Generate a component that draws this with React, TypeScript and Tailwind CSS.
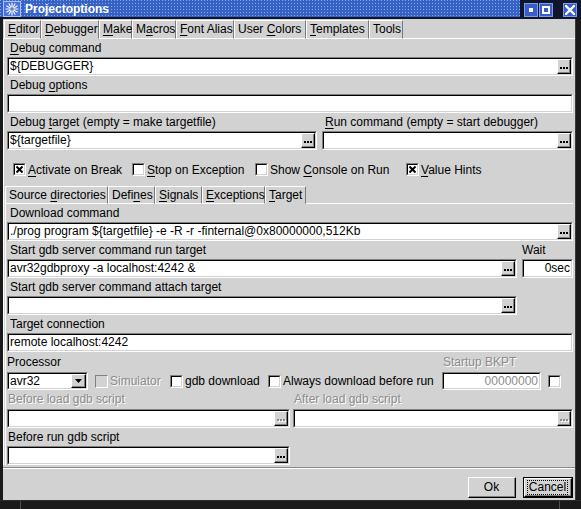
import React from "react";

type Node = React.ReactNode;

// Underline the mnemonic letter of a label
function U({ t, u }: { t: string; u?: number }) {
  if (u === undefined) return <>{t}</>;
  return (
    <>
      {t.slice(0, u)}
      <span className="underline decoration-1 underline-offset-[2px]">{t[u]}</span>
      {t.slice(u + 1)}
    </>
  );
}

const DISABLED = "text-[#8c8c8c] [text-shadow:1px_1px_0_#ffffff]";

function DotsButton({ disabled = false }: { disabled?: boolean }) {
  const dot = disabled ? "bg-[#8c8c8c] shadow-[1px_1px_0_#ffffff]" : "bg-black";
  return (
    <div className="w-[14px] h-full shrink-0 flex bg-[#d2d2d2] border border-t-white border-l-white border-b-black border-r-black">
      <div className="flex-1 flex items-end justify-center gap-[1px] pb-[3px] border-b border-r border-b-[#808080] border-r-[#808080]">
        <span className={`w-[2px] h-[2px] ${dot}`} />
        <span className={`w-[2px] h-[2px] ${dot}`} />
        <span className={`w-[2px] h-[2px] ${dot}`} />
      </div>
    </div>
  );
}

function Field({
  className = "",
  text = "",
  right = false,
  gray = false,
  dots = false,
  dotsDisabled = false,
}: {
  className?: string;
  text?: string;
  right?: boolean;
  gray?: boolean;
  dots?: boolean;
  dotsDisabled?: boolean;
}) {
  return (
    <div className={`flex h-[19px] shrink-0 border border-t-[#808080] border-l-[#808080] border-b-white border-r-white ${className}`}>
      <div className="flex flex-1 min-w-0 bg-white border border-t-black border-l-black border-b-[#d2d2d2] border-r-[#d2d2d2]">
        <span
          className={`flex-1 min-w-0 overflow-hidden whitespace-nowrap px-[1px] leading-[15px] ${right ? "text-right" : ""} ${gray ? "text-[#8c8c8c]" : "text-black"}`}
        >
          {text}
        </span>
        {dots && <DotsButton disabled={dotsDisabled} />}
      </div>
    </div>
  );
}

function Label({ children, className = "" }: { children?: Node; className?: string }) {
  return <div className={`h-[18px] leading-[18px] whitespace-nowrap shrink-0 ${className}`}>{children}</div>;
}

function Check({ checked = false, disabled = false }: { checked?: boolean; disabled?: boolean }) {
  return (
    <div className="w-[13px] h-[13px] shrink-0 flex border border-t-[#808080] border-l-[#808080] border-b-white border-r-white">
      <div
        className={`flex-1 flex items-center justify-center border ${
          disabled
            ? "bg-[#d2d2d2] border-t-[#d2d2d2] border-l-[#d2d2d2] border-b-[#d2d2d2] border-r-[#d2d2d2]"
            : "bg-white border-t-black border-l-black border-b-[#d2d2d2] border-r-[#d2d2d2]"
        }`}
      >
        {checked && (
          <svg width="7" height="7" viewBox="0 0 7 7">
            <path d="M0.5 0.5L6.5 6.5M6.5 0.5L0.5 6.5" stroke="#000" strokeWidth="2" />
          </svg>
        )}
      </div>
    </div>
  );
}

function CheckItem({
  label,
  checked = false,
  disabled = false,
  className = "",
}: {
  label: Node;
  checked?: boolean;
  disabled?: boolean;
  className?: string;
}) {
  return (
    <div className={`flex items-center gap-[2px] shrink-0 whitespace-nowrap ${className}`}>
      <Check checked={checked} disabled={disabled} />
      <span className={disabled ? DISABLED : ""}>{label}</span>
    </div>
  );
}

type TabDef = { t: string; u?: number; w: string; active?: boolean };

const mainTabs: TabDef[] = [
  { t: "Editor", u: 0, w: "w-[37px]" },
  { t: "Debugger", u: 0, w: "w-[58px]", active: true },
  { t: "Make", u: 0, w: "w-[33px]" },
  { t: "Macros", u: 1, w: "w-[44px]" },
  { t: "Font Alias", u: 0, w: "w-[58px]" },
  { t: "User Colors", u: 5, w: "w-[72px]" },
  { t: "Templates", u: 0, w: "w-[63px]" },
  { t: "Tools", w: "w-[34px]" },
];

const subTabs: TabDef[] = [
  { t: "Source directories", u: 7, w: "w-[103px]" },
  { t: "Defines", u: 4, w: "w-[47px]" },
  { t: "Signals", u: 0, w: "w-[47px]" },
  { t: "Exceptions", u: 0, w: "w-[63px]" },
  { t: "Target", u: 0, w: "w-[41px]", active: true },
];

function TabStrip({ tabs, tall }: { tabs: TabDef[]; tall: boolean }) {
  return (
    <div className={`flex items-end shrink-0 ${tall ? "h-[20px]" : "h-[19px]"}`}>
      {tabs.map((tab) => (
        <div
          key={tab.t}
          className={`${tab.w} shrink-0 whitespace-nowrap pl-[3px] border border-t-white border-l-white border-r-[#7a7a7a] ${
            tab.active ? "border-b-[#d2d2d2]" : "border-b-white"
          } ${tall ? "h-[19px] leading-[17px]" : "h-[18px] leading-[16px]"}`}
        >
          <U t={tab.t} u={tab.u} />
        </div>
      ))}
      <div className="flex-1 border-b border-b-white" />
    </div>
  );
}

function TitleButton({ kind }: { kind: "min" | "max" | "close" }) {
  return (
    <div className="w-[14px] h-[14px] shrink-0 bg-[#3a5ec8] border border-[#7e9ceb] flex items-center justify-center">
      {kind === "min" && <div className="w-[4px] h-[4px] bg-white" />}
      {kind === "max" && <div className="w-[8px] h-[8px] border-2 border-white" />}
      {kind === "close" && (
        <svg width="10" height="10" viewBox="0 0 10 10">
          <path d="M1 1L9 9M9 1L1 9" stroke="#fff" strokeWidth="2.4" />
          <path d="M0 0h2v2H0zM8 0h2v2H8zM0 8h2v2H0zM8 8h2v2H8z" fill="#fff" />
        </svg>
      )}
    </div>
  );
}

function AppIcon() {
  const rays = [0, 30, 60, 90, 120, 150, 180, 210, 240, 270, 300, 330];
  return (
    <svg width="18" height="16" viewBox="0 0 18 16">
      <rect x="0.5" y="0.5" width="17" height="15" fill="#4b73d6" stroke="#a8c0f4" />
      <g stroke="#eef6ff" strokeWidth="1.2" strokeLinecap="round">
        {rays.map((a) => {
          const r = (a * Math.PI) / 180;
          return <line key={a} x1={9} y1={8} x2={9 + Math.cos(r) * 6} y2={8 + Math.sin(r) * 6} />;
        })}
      </g>
      <circle cx="9" cy="8" r="1.8" fill="#6a7fa8" />
    </svg>
  );
}

export default function App() {
  return (
    <div className="w-[581px] h-[509px] bg-[#1a1a1a] flex flex-col overflow-hidden text-[12px] text-black font-['Liberation_Sans',Arial,sans-serif]">
      {/* title bar */}
      <div className="h-[19px] flex shrink-0 bg-[#10162a]">
        <div className="w-[520px] h-[17px] flex items-center bg-[#3562c4] bg-[conic-gradient(at_1px_1px,#3562c4_75%,#86a6ea_0)] bg-[length:3px_3px]">
          <div className="ml-[3px] mt-[1px] flex">
            <AppIcon />
          </div>
          <span className="ml-[4px] pt-[2px] font-bold text-white leading-[15px]">Projectoptions</span>
        </div>
        <div className="flex items-start pt-[3px] pl-[4px] gap-[1px]">
          <TitleButton kind="min" />
          <TitleButton kind="max" />
          <div className="w-[8px]" />
          <TitleButton kind="close" />
        </div>
      </div>

      <div className="flex h-[481px] shrink-0">
        <div className="w-[3px] bg-[#1a1a1a]" />
        <div className="w-[572px] bg-[#d2d2d2] flex flex-col">
          {/* main tab strip */}
          <div className="pl-[1px]">
            <TabStrip tabs={mainTabs} tall />
          </div>

          {/* Debugger page */}
          <div className="flex flex-col border-l border-l-white pl-[1px] pr-[2px]">
            <div className="flex flex-col pl-[2px]">
              <Label className="pl-[3px]">
                <U t="Debug command" u={0} />
              </Label>
              <Field className="w-full" text="${DEBUGGER}" dots />
              <Label className="pl-[3px]">
                <U t="Debug options" u={6} />
              </Label>
              <Field className="w-full" />
              <div className="flex">
                <Label className="w-[310px] pl-[3px]">
                  <U t="Debug target (empty = make targetfile)" u={6} />
                </Label>
                <Label className="ml-[5px] pl-[3px]">
                  <U t="Run command (empty = start debugger)" u={0} />
                </Label>
              </div>
              <div className="flex gap-[5px]">
                <Field className="w-[310px]" text="${targetfile}" dots />
                <Field className="flex-1" dots />
              </div>
            </div>

            <div className="flex items-center h-[23px] mt-[8px] pl-[8px]">
              <CheckItem className="w-[119px]" checked label={<U t="Activate on Break" u={0} />} />
              <CheckItem className="w-[123px]" label={<U t="Stop on Exception" u={0} />} />
              <CheckItem className="w-[151px]" label={<U t="Show Console on Run" u={5} />} />
              <CheckItem checked label={<U t="Value Hints" u={0} />} />
            </div>

            {/* inner tab book */}
            <div className="mt-[4px]">
              <TabStrip tabs={subTabs} tall={false} />
            </div>
            <div className="flex flex-col border-l border-l-white pl-[1px]">
              <Label className="pl-[3px]">Download command</Label>
              <Field className="w-full" text="./prog program ${targetfile} -e -R -r -finternal@0x80000000,512Kb" dots />
              <div className="flex">
                <Label className="w-[510px] pl-[3px]">Start gdb server command run target</Label>
                <Label className="ml-[5px]">Wait</Label>
              </div>
              <div className="flex gap-[5px]">
                <Field className="w-[510px]" text="avr32gdbproxy -a localhost:4242 &" dots />
                <Field className="flex-1" text="0sec" right />
              </div>
              <Label className="pl-[3px]">Start gdb server command attach target</Label>
              <Field className="w-[510px]" dots />
              <Label className="pl-[3px]">Target connection</Label>
              <Field className="w-full" text="remote localhost:4242" />

              <div className="flex h-[20px] leading-[20px] whitespace-nowrap">
                <span className="w-[436px]">Processor</span>
                <span className={DISABLED}>Startup BKPT</span>
              </div>
              <div className="flex items-center h-[18px]">
                <div className="w-[81px] h-[18px] shrink-0 flex border border-t-[#808080] border-l-[#808080] border-b-white border-r-white">
                  <div className="flex flex-1 bg-white border border-t-black border-l-black border-b-[#d2d2d2] border-r-[#d2d2d2]">
                    <span className="flex-1 px-[1px] leading-[14px]">avr32</span>
                    <div className="w-[15px] h-full flex bg-[#d2d2d2] border border-t-white border-l-white border-b-black border-r-black">
                      <div className="flex-1 flex items-center justify-center border-b border-r border-b-[#808080] border-r-[#808080]">
                        <svg width="7" height="4" viewBox="0 0 7 4">
                          <path d="M0 0H7L3.5 4Z" fill="#000" />
                        </svg>
                      </div>
                    </div>
                  </div>
                </div>
                <CheckItem className="w-[75px] ml-[7px]" disabled label="Simulator" />
                <CheckItem className="w-[98px]" label="gdb download" />
                <CheckItem className="w-[174px]" label="Always download before run" />
                <Field className="w-[99px] !h-[18px]" text="00000000" right gray />
                <div className="ml-[7px]">
                  <Check />
                </div>
              </div>

              <div className="flex h-[19px] leading-[19px] whitespace-nowrap">
                <span className={`w-[286px] pl-[1px] ${DISABLED}`}>Before load gdb script</span>
                <span className={`pl-[1px] ${DISABLED}`}>After load gdb script</span>
              </div>
              <div className="flex gap-[3px]">
                <Field className="w-[283px]" dots dotsDisabled />
                <Field className="flex-1" dots dotsDisabled />
              </div>
              <Label className="pl-[1px]">Before run gdb script</Label>
              <Field className="w-[283px]" dots />
            </div>
          </div>

          {/* separator */}
          <div className="mt-[2px] h-[2px] shrink-0 border-t border-b border-t-[#8a8a8a] border-b-white" />

          {/* dialog buttons */}
          <div className="mt-[8px] flex justify-end gap-[7px] pr-[2px]">
            <div className="w-[48px] h-[21px] flex bg-[#d2d2d2] border border-t-white border-l-white border-b-black border-r-black">
              <div className="flex-1 flex items-center justify-center border-b border-r border-b-[#808080] border-r-[#808080] leading-[14px]">
                Ok
              </div>
            </div>
            <div className="w-[50px] h-[21px] flex border border-black">
              <div className="flex-1 flex bg-[#d2d2d2] border border-t-white border-l-white border-b-black border-r-black">
                <div className="flex-1 flex items-center justify-center border-b border-r border-b-[#808080] border-r-[#808080]">
                  <span className="h-[15px] px-[1px] leading-[13px] border border-dotted border-black">Cancel</span>
                </div>
              </div>
            </div>
          </div>
        </div>
        <div className="w-[6px] bg-[#1a1a1a] border-l border-l-[#3a3a3a]" />
      </div>

      {/* bottom frame with resize grips */}
      <div className="h-[9px] shrink-0 flex bg-[#1a1a1a] border-t border-t-[#2c2c2c]">
        <div className="w-[20px]" />
        <div className="w-[1px] bg-[#505050]" />
        <div className="flex-1" />
        <div className="w-[1px] bg-[#505050]" />
        <div className="w-[21px]" />
      </div>
    </div>
  );
}
